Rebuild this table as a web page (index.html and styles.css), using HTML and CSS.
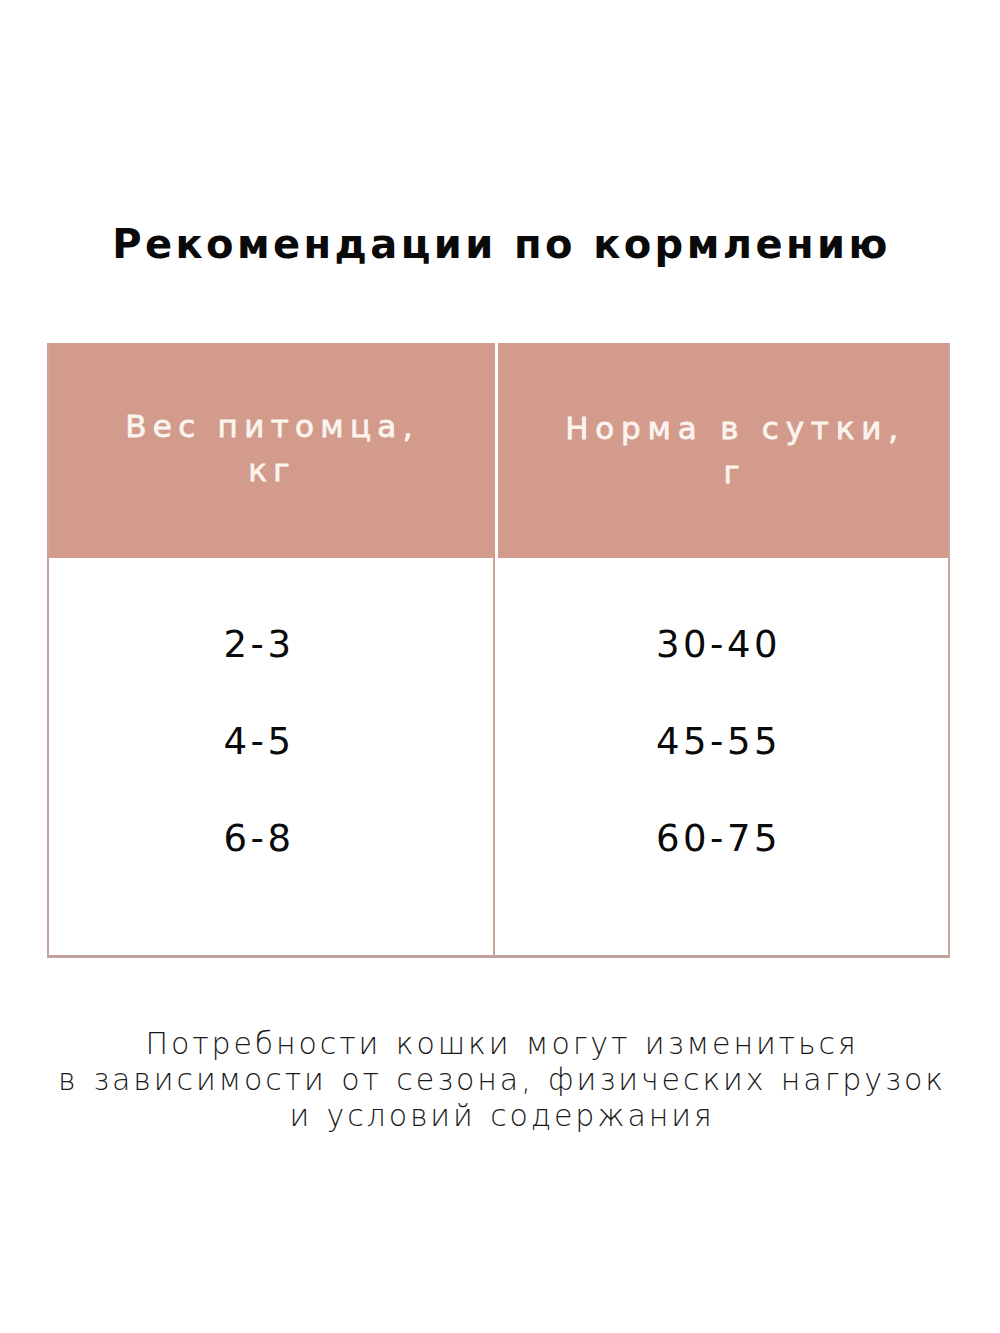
FILE: index.html
```html
<!DOCTYPE html>
<html lang="ru">
<head>
<meta charset="utf-8">
<link rel="stylesheet" href="styles.css">
</head>
<body>
<main class="page">
  <h1 class="title">Рекомендации по кормлению</h1>
  <section class="table">
    <div class="head">
      <div class="hcell">Вес питомца,<br>кг</div>
      <div class="hcell hcell-right">Норма в сутки,<br>г</div>
    </div>
    <div class="body">
      <div class="col col-left">
        <div class="val">2-3</div>
        <div class="val">4-5</div>
        <div class="val">6-8</div>
      </div>
      <div class="col col-right">
        <div class="val">30-40</div>
        <div class="val">45-55</div>
        <div class="val">60-75</div>
      </div>
    </div>
  </section>
  <p class="note">Потребности кошки могут измениться<br>в зависимости от сезона, физических нагрузок<br>и условий содержания</p>
</main>
</body>
</html>
```
FILE: styles.css
```css
html, body {
  margin: 0;
  padding: 0;
  background: #ffffff;
}
.page {
  width: 1000px;
  height: 1333px;
  font-family: "DejaVu Sans", "Open Sans", sans-serif;
  color: #111;
  overflow: hidden;
}
.title {
  margin: 0;
  padding-top: 218px;
  text-align: center;
  font-size: 40px;
  font-weight: 700;
  letter-spacing: 3.4px;
  line-height: 52px;
  color: #0a0a0a;
  padding-left: 3px;
}
.table {
  margin: 73px 0 0 47px;
  width: 903px;
  box-sizing: border-box;
  border: 2px solid #c9a59e;
  border-top: 0;
  border-bottom: 3px solid #c2a29e;
}
.head {
  display: grid;
  grid-template-columns: 446px 1fr;
  height: 215px;
  column-gap: 3px;
  background: #ffffff;
}
.hcell {
  background: #d39b8b;
  color: #fbf3ee;
  font-size: 31px;
  font-weight: 400;
  -webkit-text-stroke: 0.8px #fbf3ee;
  letter-spacing: 6.3px;
  line-height: 44px;
  text-align: center;
  display: flex;
  align-items: center;
  justify-content: center;
  padding-bottom: 6px;
  box-sizing: border-box;
}
.hcell-right {
  padding-top: 4px;
  padding-left: 24px;
  letter-spacing: 6.8px;
}
.body {
  display: grid;
  grid-template-columns: 446px 1fr;
  height: 397px;
}
.col {
  display: flex;
  flex-direction: column;
  align-items: center;
  padding-top: 58px;
  gap: 40px;
}
.col-left {
  border-right: 2px solid #c9a59e;
  padding-right: 24px;
}
.col-right {
  padding-right: 6px;
}
.val {
  font-size: 37px;
  font-weight: 500;
  letter-spacing: 3.5px;
  line-height: 57px;
  color: #0a0a0a;
}
.note {
  margin: 68px 0 0 0;
  padding-left: 4px;
  text-align: center;
  font-size: 30px;
  font-weight: 200;
  letter-spacing: 2.9px;
  word-spacing: 2px;
  line-height: 36px;
  color: #1a1a1a;
  font-family: "DejaVu Sans", "Open Sans", sans-serif;
}
```
